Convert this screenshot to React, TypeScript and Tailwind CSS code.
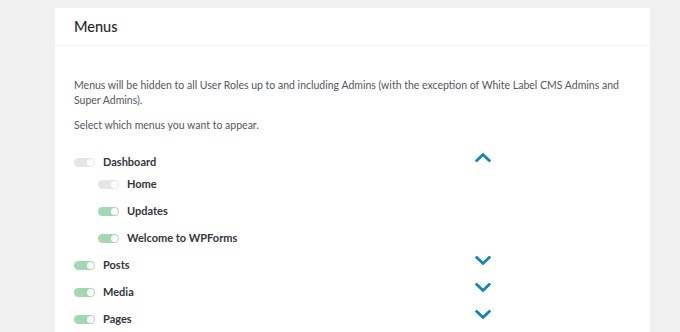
import React from 'react';

type Item = {
  label: string;
  on: boolean;
  sub?: boolean;
  chevron?: 'up' | 'down';
  gap: string;
};

const items: Item[] = [
  { label: 'Dashboard', on: false, chevron: 'up', gap: 'mt-[19px]' },
  { label: 'Home', on: false, sub: true, gap: 'mt-[2px]' },
  { label: 'Updates', on: true, sub: true, gap: 'mt-[7px]' },
  { label: 'Welcome to WPForms', on: true, sub: true, gap: 'mt-[7px]' },
  { label: 'Posts', on: true, chevron: 'down', gap: 'mt-[7px]' },
  { label: 'Media', on: true, chevron: 'down', gap: 'mt-[7px]' },
  { label: 'Pages', on: true, chevron: 'down', gap: 'mt-[7px]' },
];

function Toggle({ on }: { on: boolean }) {
  return (
    <div
      className={
        'flex h-[9px] w-[21px] items-center justify-end rounded-full px-[1px] ' +
        (on ? 'bg-[#a3d9b1]' : 'bg-[#e6e6e6]')
      }
    >
      <div className="h-[7px] w-[7px] rounded-full bg-white" />
    </div>
  );
}

function Chevron({ dir }: { dir: 'up' | 'down' }) {
  return (
    <svg width="16" height="9" viewBox="0 0 16 9" className="mb-[10px]">
      <path
        d={dir === 'up' ? 'M1.8 7.5 L8 1.6 L14.2 7.5' : 'M1.8 1.5 L8 7.4 L14.2 1.5'}
        fill="none"
        stroke="#0a87be"
        strokeWidth="2.8"
        strokeLinecap="square"
      />
    </svg>
  );
}

export default function App() {
  return (
    <div
      className="min-h-[332px] w-[680px] bg-[#f0f0f1] pl-[55px] pt-[8px]"
      style={{ fontFamily: 'Lato, "Open Sans", sans-serif' }}
    >
      <div className="min-h-[324px] w-[595px] bg-white">
        {/* header */}
        <div className="flex h-[38px] items-center border-b border-[#f2f2f2] px-[19px]">
          <h2 className="text-[14.5px] font-medium text-[#23282d]">Menus</h2>
        </div>

        {/* body */}
        <div className="px-[19px] pt-[32px]">
          <p className="text-[10.5px] leading-[15px] text-[#50575e]">
            Menus will be hidden to all User Roles up to and including Admins (with the exception of White
            Label CMS Admins and Super Admins).
          </p>
          <p className="mt-[10px] text-[10.5px] leading-[15px] text-[#50575e]">
            Select which menus you want to appear.
          </p>

          <div className="flex flex-col">
            {items.map((it) => (
              <div key={it.label} className={'flex h-[20px] w-[417px] items-center justify-between ' + it.gap}>
                <div className={'flex items-center gap-[8px] ' + (it.sub ? 'pl-[24px]' : '')}>
                  <Toggle on={it.on} />
                  <span className="text-[11px] font-bold text-[#32373c]">{it.label}</span>
                </div>
                {it.chevron && <Chevron dir={it.chevron} />}
              </div>
            ))}
          </div>
        </div>
      </div>
    </div>
  );
}
